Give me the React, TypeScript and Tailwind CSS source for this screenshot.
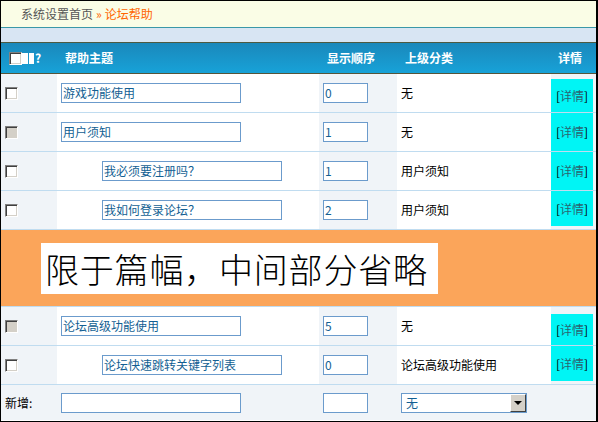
import React from "react";

type Row = {
  title: string;
  order: string;
  parent: string;
  child?: boolean;
  grey?: boolean;
};

const topRows: Row[] = [
  { title: "游戏功能使用", order: "0", parent: "无" },
  { title: "用户须知", order: "1", parent: "无", grey: true },
  { title: "我必须要注册吗？", order: "1", parent: "用户须知", child: true },
  { title: "我如何登录论坛？", order: "2", parent: "用户须知", child: true },
];

const bottomRows: Row[] = [
  { title: "论坛高级功能使用", order: "5", parent: "无", grey: true },
  { title: "论坛快速跳转关键字列表", order: "0", parent: "论坛高级功能使用", child: true },
];

const cols = "grid grid-cols-[56px_262px_78px_154px_45px]";

function CheckBox({ grey }: { grey?: boolean }) {
  return (
    <div
      className={`w-[13px] h-[13px] border border-t-[#808080] border-l-[#808080] border-r-white border-b-white shadow-[inset_1px_1px_0_#404040,inset_-1px_-1px_0_#d4d0c8] ${
        grey ? "bg-[#d4d0c8]" : "bg-white"
      }`}
    />
  );
}

function TextBox({ value, w }: { value: string; w: string }) {
  return (
    <div
      className={`${w} h-[20px] border border-[#6b9bcc] bg-white text-[#135f93] text-[12px] leading-[18px] px-[1px] whitespace-nowrap overflow-hidden`}
    >
      {value}
    </div>
  );
}

function Detail() {
  return (
    <span className="text-[12px] text-black">
      [<span className="text-[#2a6470]">详情</span>]
    </span>
  );
}

function DataRow({ row, cyan }: { row: Row; cyan: string }) {
  return (
    <div className={`${cols} h-[39px] border-b border-[#c0dcf0]`}>
      <div className="bg-[#f0f4f8] flex items-center pl-[4px]">
        <CheckBox grey={row.grey} />
      </div>
      <div className={`flex items-center ${row.child ? "pl-[45px]" : "pl-[4px]"}`}>
        <TextBox value={row.title} w="w-[180px]" />
      </div>
      <div className="bg-[#f0f4f8] flex items-center pl-[4px]">
        <TextBox value={row.order} w="w-[45px]" />
      </div>
      <div className="flex items-center pl-[4px] text-[12px] text-black">{row.parent}</div>
      <div className="bg-[#f0f4f8] flex flex-col">
        <div className={`w-[42px] flex-1 bg-[#00f5f5] flex items-center justify-center ${cyan}`}>
          <Detail />
        </div>
      </div>
    </div>
  );
}

export default function App() {
  return (
    <div
      className="w-[598px] h-[422px] overflow-hidden bg-white border-t border-l border-b border-r-2 border-black"
      style={{ fontFamily: '"Noto Sans CJK SC", "Liberation Sans", sans-serif' }}
    >
      {/* 面包屑 */}
      <div className="h-[27px] bg-[#fafde6] border-b border-[#3a98a8] flex items-center pl-[20px] text-[12px]">
        <span className="text-[#555]">系统设置首页</span>
        <span className="text-[#ff6600] mx-[3px]">»</span>
        <span className="text-[#ff6600]">论坛帮助</span>
      </div>
      <div className="h-[15px] bg-[#d8e5f3] border-b border-[#4d5a40]" />

      {/* 表头 */}
      <div
        className={`${cols} h-[31px] border-b border-[#55553a] bg-gradient-to-b from-[#1a88bb] to-[#17a2d8] text-white font-bold text-[12px]`}
      >
        <div className="flex items-center pl-[8px]">
          <CheckBox />
          <div className="w-[6px] h-[11px] bg-white" />
          <div className="w-[5px] h-[11px] bg-white ml-[1px]" />
          <span className="ml-[1px]">?</span>
        </div>
        <div className="flex items-center pl-[8px]">帮助主题</div>
        <div className="flex items-center pl-[8px]">显示顺序</div>
        <div className="flex items-center pl-[8px]">上级分类</div>
        <div className="flex items-center pl-[7px]">详情</div>
      </div>

      {topRows.map((r, i) => (
        <DataRow
          key={r.title}
          row={r}
          cyan={i === 0 ? "mt-[5px]" : i === topRows.length - 1 ? "mb-[3px]" : ""}
        />
      ))}

      {/* 省略 */}
      <div className="h-[77px] bg-[#fba55a] border-b border-[#c0dcf0] pt-[13px] pl-[40px]">
        <div className="w-[397px] h-[51px] bg-white flex items-center pl-[4px] text-[34px] tracking-[0.8px] text-black leading-none whitespace-nowrap font-light">
          限于篇幅，中间部分省略
        </div>
      </div>

      {bottomRows.map((r, i) => (
        <DataRow key={r.title} row={r} cyan={i === 0 ? "mt-[7px]" : "mb-[3px]"} />
      ))}

      {/* 新增 */}
      <div className={`${cols} h-[35px] bg-[#f0f4f8] text-[12px]`}>
        <div className="flex items-center pl-[4px] text-black">新增:</div>
        <div className="flex items-center pl-[4px]">
          <TextBox value="" w="w-[180px]" />
        </div>
        <div className="flex items-center pl-[4px]">
          <TextBox value="" w="w-[45px]" />
        </div>
        <div className="flex items-center pl-[4px] col-span-2">
          <div className="w-[126px] h-[20px] border border-[#6b9bcc] bg-white flex items-center justify-between">
            <span className="pl-[4px] text-[#135f93]">无</span>
            <div className="w-[16px] h-[18px] bg-[#d4d0c8] border border-t-white border-l-white border-r-[#404040] border-b-[#404040] flex items-center justify-center">
              <div className="w-0 h-0 border-l-[4px] border-r-[4px] border-t-[4px] border-l-transparent border-r-transparent border-t-black" />
            </div>
          </div>
        </div>
      </div>
    </div>
  );
}
